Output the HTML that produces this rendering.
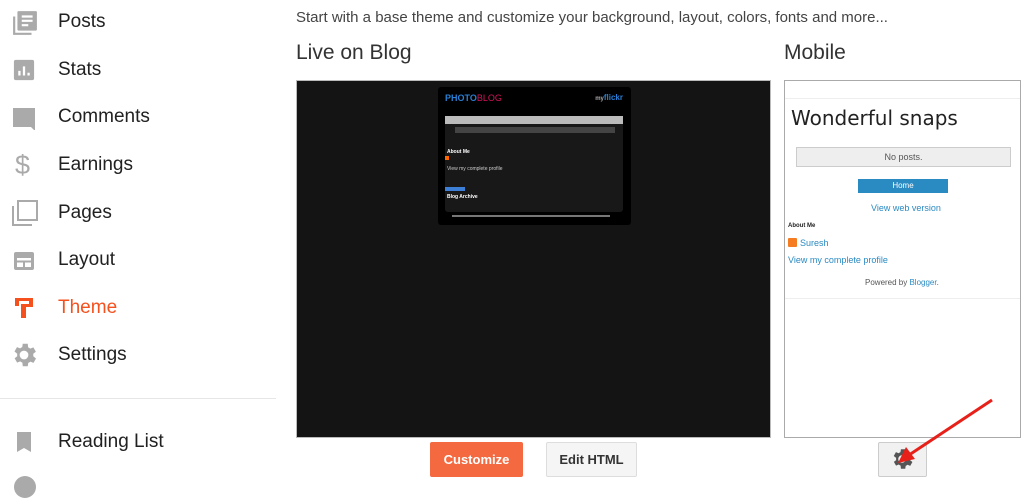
<!DOCTYPE html>
<html><head><style>
body{margin:0;width:1024px;height:482px;overflow:hidden;background:#fff;font-family:"Liberation Sans",sans-serif;position:relative}
.a{position:absolute}
.nav{position:absolute;left:58px;font-size:19px;color:#212121}
.ic{position:absolute;left:12px;width:24px;height:24px}
</style></head><body>
<svg width="0" height="0" style="position:absolute"><defs><path id="g" d="M12 8.5a3.5 3.5 0 1 0 0 7 3.5 3.5 0 0 0 0-7zM19.4 13a7.5 7.5 0 0 0 0-2l2.1-1.6-2-3.5-2.5 1a7 7 0 0 0-1.7-1L15 3h-4l-.4 2.7a7 7 0 0 0-1.7 1l-2.5-1-2 3.5L6.6 11a7.5 7.5 0 0 0 0 2l-2.1 1.6 2 3.5 2.5-1a7 7 0 0 0 1.7 1L11 21h4l.4-2.7a7 7 0 0 0 1.7-1l2.5 1 2-3.5z" fill-rule="evenodd"/></defs></svg>
<!-- sidebar -->
<svg class="ic" style="top:10px;height:26px;width:26px" viewBox="0 0 24 24"><path d="M1 6v17h17v-2H3V6z" fill="#aaa"/><rect x="5" y="1" width="18" height="18" rx="1" fill="#aaa"/><path d="M9 6h10M9 10h10M9 14h6" stroke="#fff" stroke-width="2"/></svg>
<div class="nav" style="top:11px">Posts</div>
<svg class="ic" style="top:59px;width:22px;height:22px;left:13px" viewBox="0 0 24 24"><rect x="1" y="1" width="22" height="22" rx="2" fill="#aaa"/><path d="M7 18v-5M12 18V8M17 18v-3" stroke="#fff" stroke-width="2.5"/></svg>
<div class="nav" style="top:59px">Stats</div>
<svg class="ic" style="top:106px" viewBox="0 0 24 24"><path d="M1 2h22v19v4l-4-4H1z" fill="#aaa"/></svg>
<div class="nav" style="top:106px">Comments</div>
<div class="a" style="left:15px;top:150px;font-size:27px;color:#aaa">$</div>
<div class="nav" style="top:154px">Earnings</div>
<svg class="ic" style="top:200px;width:26px;height:26px" viewBox="0 0 26 26"><path d="M1 6v19h19" fill="none" stroke="#aaa" stroke-width="2"/><rect x="6" y="1" width="19" height="19" fill="none" stroke="#aaa" stroke-width="2"/></svg>
<div class="nav" style="top:202px">Pages</div>
<svg class="ic" style="top:249px" viewBox="0 0 24 24"><rect x="2" y="3" width="20" height="18" rx="2" fill="#aaa"/><path d="M5 9h14v9H5z" fill="#fff"/><path d="M4 12.5h16" stroke="#aaa" stroke-width="2"/><path d="M12 12v6" stroke="#aaa" stroke-width="2"/></svg>
<div class="nav" style="top:249px">Layout</div>
<svg class="ic" style="top:296px" viewBox="0 0 24 24"><path d="M3 2h18v9H9v-3h8V5H3z" fill="#f4511e"/><rect x="3" y="2" width="4" height="8" fill="#f4511e"/><rect x="9" y="10" width="5" height="12" fill="#f4511e"/></svg>
<div class="nav" style="top:297px;color:#f4511e">Theme</div>
<svg class="ic" style="top:340px;left:9px;width:30px;height:30px" viewBox="0 0 24 24"><use href="#g" fill="#aaa"/></svg>
<div class="nav" style="top:344px">Settings</div>
<div class="a" style="left:0;top:398px;width:276px;height:1px;background:#e6e6e6"></div>
<svg class="ic" style="top:430px" viewBox="0 0 24 24"><path d="M5 2h14v20l-7-4-7 4z" fill="#aaa"/></svg>
<div class="nav" style="top:431px">Reading List</div>
<div class="a" style="left:14px;top:476px;width:22px;height:22px;border-radius:50%;background:#aaa"></div>
<!-- main -->
<div class="a" style="left:296px;top:9px;font-size:15px;color:#444">Start with a base theme and customize your background, layout, colors, fonts and more...</div>
<div class="a" style="left:296px;top:41px;font-size:21px;color:#333">Live on Blog</div>
<div class="a" style="left:784px;top:41px;font-size:21px;color:#333">Mobile</div>
<div class="a" style="left:296px;top:80px;width:473px;height:356px;background:#141414;border:1px solid #bbb"></div>
<div class="a" style="left:438px;top:87px;width:193px;height:138px;background:#000;border-radius:3px">
 <div class="a" style="left:7px;top:6px;font-size:9px;font-weight:bold;color:#2a7fd4">PHOTO<span style="color:#d4145a;font-weight:normal">BLOG</span></div>
 <div class="a" style="right:8px;top:6px;font-size:8px;font-weight:bold;color:#2a7fd4"><span style="color:#aaa;font-size:6px">my</span>flickr</div>
 <div class="a" style="left:7px;top:29px;width:178px;height:96px;background:#181818;border-radius:3px"></div>
 <div class="a" style="left:7px;top:29px;width:178px;height:8px;background:#bbb"></div>
 <div class="a" style="left:17px;top:40px;width:160px;height:6px;background:#444"></div>
 <div class="a" style="left:9px;top:62px;font-size:5px;color:#fff;font-weight:bold">About Me</div>
 <div class="a" style="left:7px;top:69px;width:4px;height:4px;background:#f60"></div>
 <div class="a" style="left:9px;top:79px;font-size:5px;color:#ccc">View my complete profile</div>
 <div class="a" style="left:7px;top:100px;width:20px;height:4px;background:#3d7fd6"></div>
 <div class="a" style="left:9px;top:107px;font-size:5px;color:#fff;font-weight:bold">Blog Archive</div>
 <div class="a" style="left:14px;top:128px;width:158px;height:2px;background:#777"></div>
</div>
<div class="a" style="left:784px;top:80px;width:235px;height:356px;border:1px solid #aaa;background:#fff">
 <div class="a" style="left:0;top:17px;width:235px;height:1px;background:#eee"></div>
 <div class="a" style="left:6px;top:25px;font-size:20px;color:#222;font-family:'DejaVu Sans',sans-serif">Wonderful snaps</div>
 <div class="a" style="left:11px;top:66px;width:213px;height:18px;background:#eee;border:1px solid #ccc;font-size:9px;color:#555;text-align:center;line-height:18px">No posts.</div>
 <div class="a" style="left:73px;top:98px;width:90px;height:14px;background:#2a8ac2;font-size:8px;color:#fff;text-align:center;line-height:14px">Home</div>
 <div class="a" style="left:86px;top:122px;font-size:9px;color:#2a8ac2">View web version</div>
 <div class="a" style="left:3px;top:142px;font-size:6px;color:#222;font-weight:bold">About Me</div>
 <div class="a" style="left:3px;top:157px;width:9px;height:9px;background:#f57c20;border-radius:1px"></div>
 <div class="a" style="left:15px;top:157px;font-size:9px;color:#2a8ac2">Suresh</div>
 <div class="a" style="left:3px;top:174px;font-size:9px;color:#2a8ac2">View my complete profile</div>
 <div class="a" style="left:80px;top:197px;font-size:8px;color:#555">Powered by <span style="color:#2a8ac2">Blogger</span>.</div>
 <div class="a" style="left:0;top:217px;width:235px;height:1px;background:#eee"></div>
</div>
<div class="a" style="left:430px;top:442px;width:93px;height:35px;background:#f4693f;border-radius:2px;color:#fff;font-weight:bold;font-size:13px;text-align:center;line-height:35px">Customize</div>
<div class="a" style="left:546px;top:442px;width:89px;height:33px;background:#f5f5f5;border:1px solid #ddd;border-radius:2px;color:#333;font-weight:bold;font-size:13px;text-align:center;line-height:33px">Edit HTML</div>
<div class="a" style="left:878px;top:442px;width:47px;height:33px;background:#f1f1f1;border:1px solid #ccc;border-radius:2px"></div>
<svg class="a" style="left:889px;top:446px" width="26" height="26" viewBox="0 0 24 24"><use href="#g" fill="#555"/></svg>
<svg class="a" style="left:890px;top:395px" width="110" height="70"><line x1="102" y1="5" x2="16" y2="62" stroke="#e8201a" stroke-width="3"/><path d="M8 68 L16 52 L25 64z" fill="#e8201a"/></svg>
</body></html>
